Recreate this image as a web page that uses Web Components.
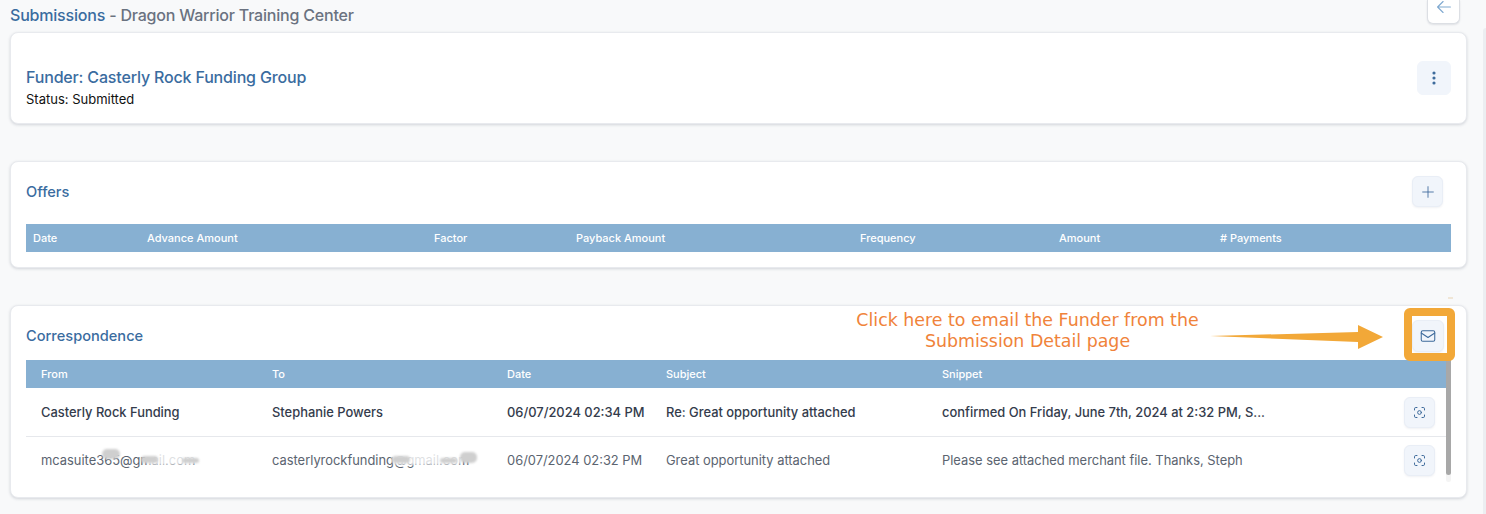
<!DOCTYPE html>
<html>
<head>
<meta charset="utf-8">
<title>Submissions</title>
<style>
  html, body { margin: 0; height: 100%; overflow: hidden; background: #f8f9fa; }
  body { font-family: Inter, "Liberation Sans", sans-serif; }
</style>
</head>
<body>
<submission-page></submission-page>

<script>
const ICONS = {
  back: '<path d="M19 12H5M11 6l-6 6 6 6"/>',
  dots: '<circle cx="12" cy="6" r="1.1" fill="currentColor"/><circle cx="12" cy="12" r="1.1" fill="currentColor"/><circle cx="12" cy="18" r="1.1" fill="currentColor"/>',
  plus: '<path d="M12 4v16M4 12h16"/>',
  mail: '<rect x="3" y="5" width="18" height="14" rx="2"/><path d="M3 8l9 6 9-6"/>',
  scan: '<path d="M4 8V6a2 2 0 0 1 2-2h2M16 4h2a2 2 0 0 1 2 2v2M20 16v2a2 2 0 0 1-2 2h-2M8 20H6a2 2 0 0 1-2-2v-2"/><circle cx="12" cy="12" r="3"/>'
};

class IconButton extends HTMLElement {
  connectedCallback() {
    if (this.shadowRoot) return;
    this.attachShadow({ mode: 'open' });
    const size = this.getAttribute('size') || 34;
    const icon = this.getAttribute('icon') || 16;
    const flat = this.hasAttribute('flat');
    const stroke = this.getAttribute('stroke') || 1.6;
    this.shadowRoot.innerHTML = `
      <style>
        :host { display: block; flex: none; }
        button {
          display: flex; align-items: center; justify-content: center;
          width: ${size}px; height: ${size}px; padding: 0;
          background: #f1f5fb; color: #3d6a9b;
          border: 1px solid ${flat ? '#f1f5fb' : '#e9eef6'}; border-radius: 6px;
          box-shadow: ${flat ? 'none' : '0 1px 2px rgba(60,80,120,.08)'};
        }
        svg { width: ${icon}px; height: ${icon}px; fill: none; stroke: currentColor; stroke-width: ${stroke}; stroke-linecap: round; stroke-linejoin: round; }
      </style>
      <button type="button"><svg viewBox="0 0 24 24">${ICONS[this.getAttribute('name')]}</svg></button>
    `;
  }
}

class InfoCard extends HTMLElement {
  constructor() {
    super();
    this.attachShadow({ mode: 'open' });
    this.shadowRoot.innerHTML = `
      <style>
        :host {
          display: block; box-sizing: border-box; background: #fff;
          border: 1px solid #e8eaee; border-radius: 8px;
          box-shadow: 0 1px 3px rgba(40,50,70,.18);
        }
      </style>
      <slot></slot>
    `;
  }
}

class DataTable extends HTMLElement {
  set data(d) {
    if (!this.shadowRoot) this.attachShadow({ mode: 'open' });
    const grid = d.columns.join(' ');
    this.shadowRoot.innerHTML = `
      <style>
        :host { display: block; font-size: 12px; }
        .row { display: grid; grid-template-columns: ${grid}; align-items: center; }
        .head {
          height: 28px; background: #87b0d2; color: #fff; font-weight: 500;
          font-size: 11px;
        }
        .body .row { font-size: 12.9px; color: #5b6470; border-bottom: 1px solid #e6e8ec; }
        .body .row:last-child { border-bottom: 0; }
        .body .row.strong { color: #343c4c; font-weight: 500; }
        .cell { position: relative; padding-left: ${d.pad}px; white-space: nowrap; }
        .act { display: flex; }
      </style>
      <div class="row head">${d.heads.map(h => `<div class="cell">${h}</div>`).join('')}</div>
      <div class="body">
        ${d.rows.map(r => `
          <div class="row ${r.strong ? 'strong' : ''}" style="height:${r.height}px">
            ${r.cells.map(c => `<div class="cell">${c}</div>`).join('')}
            <div class="act"><icon-button name="scan" size="31" icon="15"></icon-button></div>
          </div>
        `).join('')}
      </div>
    `;
  }
}

class CalloutNote extends HTMLElement {
  constructor() {
    super();
    this.attachShadow({ mode: 'open' });
    this.shadowRoot.innerHTML = `
      <style>
        :host { position: absolute; inset: 0; pointer-events: none; display: block; }
        .text {
          position: absolute; left: 845px; top: 310px; width: 365px;
          text-align: center; color: #f0833a;
          font: 17.4px/21px "DejaVu Sans", sans-serif; letter-spacing: 0;
        }
        .box {
          position: absolute; left: 1404px; top: 308px; width: 51px; height: 53px;
          box-sizing: border-box; border: 8px solid #f2a838; border-radius: 6px;
        }
        svg { position: absolute; left: 1208px; top: 322px; width: 180px; height: 30px; }
      </style>
      <div class="text">Click here to email the Funder from the Submission Detail page</div>
      <svg viewBox="0 0 180 30"><path d="M2 14 L150 10 L150 3 L175 15 L150 27 L150 20 Z" fill="#f2a838"/></svg>
      <div class="box"></div>
    `;
  }
}

class BlurBlob extends HTMLElement {
  constructor() {
    super();
    this.attachShadow({ mode: 'open' });
    this.shadowRoot.innerHTML = `
      <style>
        :host {
          position: absolute; display: block; background: #cfcfcf;
          border-radius: 5px; filter: blur(1px);
        }
      </style>
    `;
  }
}

class SubmissionPage extends HTMLElement {
  constructor() {
    super();
    this.attachShadow({ mode: 'open' });
    this.shadowRoot.innerHTML = `
      <style>
        :host { display: block; position: relative; width: 1486px; height: 514px; overflow: hidden; }
        .page { display: flex; flex-direction: column; padding: 0 19px 0 10px; }
        .top { display: flex; justify-content: space-between; height: 32px; padding-right: 7px; }
        h1 { margin: 6px 0 0; font-size: 16px; line-height: 19px; font-weight: 500; color: #6a7280; letter-spacing: -.2px; }
        h1 span { color: #3a6c9f; }
        .back {
          width: 33px; height: 24px; box-sizing: border-box; background: #fff; color: #7fa9d0;
          border: 1px solid #dcdfe4; border-top: 0; border-radius: 0 0 6px 6px;
          display: flex; align-items: flex-start; justify-content: center;
          box-shadow: 0 1px 2px rgba(40,50,70,.12);
        }
        .back svg { width: 22px; height: 22px; fill: none; stroke: currentColor; stroke-width: 1.2; stroke-linecap: round; stroke-linejoin: round; margin-top: -4px; }
        info-card.funder-card { margin-bottom: 37px; }
        info-card.offers-card { margin-bottom: 37px; }
        .funder { height: 90px; display: flex; align-items: center; justify-content: space-between; padding: 0 15px; }
        .funder .who { padding-top: 19px; }
        h2 { margin: 0; font-size: 16px; line-height: 20px; font-weight: 500; color: #3a6c9f; letter-spacing: -.17px; }
        .status { font-size: 13px; line-height: 18px; color: #111; margin-top: 3px; }
        .offers { height: 105px; padding: 0 15px; }
        .bar { display: flex; align-items: center; justify-content: space-between; box-sizing: border-box; }
        .offers .bar { height: 62px; padding-right: 8px; padding-bottom: 3px; }
        .offers h2, .corr h2 { font-size: 14.6px; letter-spacing: 0; }
        .corr { height: 191px; padding: 0 15px; }
        .corr .bar { height: 54px; padding-right: 7px; padding-top: 6px; }
        .scroller { display: flex; }
        .scroller data-table { flex: 1; }
        .track { width: 5px; height: 122px; background: #f4f4f4; border-radius: 0 0 3px 3px; }
        .thumb { width: 5px; height: 115px; background: #a8a8a8; border-radius: 0 0 3px 3px; }
        .edge { position: absolute; left: 1483px; top: 28px; width: 3px; bottom: 0; background: #eceef1; border-radius: 3px 0 0 0; }
        .tick { position: absolute; left: 1448px; top: 297px; width: 5px; height: 2px; background: #f0e6d6; }
      </style>
      <div class="page">
        <div class="top">
          <h1><span>Submissions</span> - Dragon Warrior Training Center</h1>
          <div class="back"><svg viewBox="0 0 24 24">${ICONS.back}</svg></div>
        </div>
        <info-card class="funder-card">
          <div class="funder">
            <div class="who">
              <h2>Funder: Casterly Rock Funding Group</h2>
              <div class="status">Status: Submitted</div>
            </div>
            <icon-button name="dots" size="34" icon="20" flat></icon-button>
          </div>
        </info-card>
        <info-card class="offers-card">
          <div class="offers">
            <div class="bar"><h2>Offers</h2><icon-button name="plus" size="31" icon="16" stroke="1.3"></icon-button></div>
            <data-table id="offers"></data-table>
          </div>
        </info-card>
        <info-card>
          <div class="corr">
            <div class="bar"><h2>Correspondence</h2><icon-button name="mail" size="32" icon="18" stroke="1.4"></icon-button></div>
            <div class="scroller">
              <data-table id="mail"></data-table>
              <div class="track"><div class="thumb"></div></div>
            </div>
          </div>
        </info-card>
      </div>
      <blur-blob style="left:146px;top:452px;width:50px;height:13px;background:rgba(255,255,255,.8)"></blur-blob>
      <blur-blob style="left:102px;top:449px;width:18px;height:10px"></blur-blob>
      <blur-blob style="left:141px;top:456px;width:17px;height:7px"></blur-blob>
      <blur-blob style="left:182px;top:458px;width:17px;height:5px"></blur-blob>
      <blur-blob style="left:392px;top:452px;width:70px;height:13px;background:rgba(255,255,255,.8)"></blur-blob>
      <blur-blob style="left:392px;top:456px;width:18px;height:7px"></blur-blob>
      <blur-blob style="left:440px;top:458px;width:17px;height:5px"></blur-blob>
      <blur-blob style="left:460px;top:452px;width:17px;height:11px"></blur-blob>
      <div class="edge"></div>
      <div class="tick"></div>
      <callout-note></callout-note>
    `;
  }

  connectedCallback() {
    const root = this.shadowRoot;
    root.getElementById('offers').data = {
      pad: 7,
      columns: ['114px', '287px', '142px', '284px', '199px', '161px', '1fr'],
      heads: ['Date', 'Advance Amount', 'Factor', 'Payback Amount', 'Frequency', 'Amount', '# Payments'],
      rows: []
    };
    root.getElementById('mail').data = {
      pad: 15,
      columns: ['231px', '235px', '159px', '276px', '477px', '1fr'],
      heads: ['From', 'To', 'Date', 'Subject', 'Snippet', ''],
      rows: [
        { strong: true, height: 48, cells: ['Casterly Rock Funding', 'Stephanie Powers', '06/07/2024 02:34 PM', 'Re: Great opportunity attached', 'confirmed On Friday, June 7th, 2024 at 2:32 PM, S...'] },
        { height: 46, cells: ['mcasuite365@gmail.com', 'casterlyrockfunding@gmail.com', '06/07/2024 02:32 PM', 'Great opportunity attached', 'Please see attached merchant file. Thanks, Steph'] }
      ]
    };
  }
}

customElements.define('icon-button', IconButton);
customElements.define('info-card', InfoCard);
customElements.define('data-table', DataTable);
customElements.define('callout-note', CalloutNote);
customElements.define('blur-blob', BlurBlob);
customElements.define('submission-page', SubmissionPage);
</script>
</body>
</html>
